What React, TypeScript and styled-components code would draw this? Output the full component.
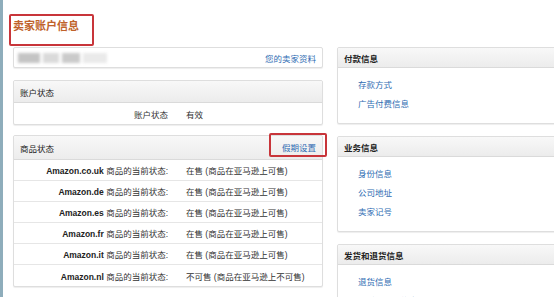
import React from "react";
import styled, { createGlobalStyle } from "styled-components";

const GlobalStyle = createGlobalStyle`
  html, body { margin: 0; padding: 0; background: #fff; }
  body {
    font-family: "Liberation Sans", "Noto Sans CJK SC", sans-serif;
    font-size: 8.5px;
    color: #333;
  }
  * { box-sizing: border-box; }
`;

const Page = styled.div`
  height: 297px;
  overflow: hidden;
  border-left: 3px solid #8eadbb;
  padding-left: 10px;
`;

const TitleBar = styled.div`
  height: 47px;
  padding-top: 21px;
`;

const Title = styled.h1`
  position: relative;
  display: inline-block;
  margin: 0;
  font-size: 11px;
  line-height: 11px;
  font-weight: bold;
  color: #c0622a;
  &::after {
    content: "";
    position: absolute;
    top: -7px;
    left: -4px;
    right: -15px;
    bottom: -14px;
    border: 2px solid #c8353a;
    border-radius: 2px;
  }
`;

const Columns = styled.div`
  display: grid;
  grid-template-columns: 310px 220px;
  column-gap: 14px;
  align-items: start;
`;

const Column = styled.div`
  display: flex;
  flex-direction: column;
`;

const Panel = styled.section<{ $gap?: number }>`
  margin-top: ${(p) => p.$gap ?? 0}px;
  border: 1px solid #dedede;
  border-radius: 2px;
  background: #fff;
  box-shadow: 0 1px 1px rgba(0, 0, 0, 0.07);
`;

const ProfileBar = styled(Panel)`
  height: 21px;
  display: flex;
  align-items: center;
  justify-content: space-between;
  padding: 0 6px 0 4px;
`;

const Blurred = styled.div`
  display: flex;
  gap: 3px;
  filter: blur(1.8px);
`;

const BlurBlock = styled.span<{ $w: number; $c: string }>`
  display: block;
  width: ${(p) => p.$w}px;
  height: 10px;
  background: ${(p) => p.$c};
`;

const Header = styled.div<{ $h: number; $bold?: boolean }>`
  height: ${(p) => p.$h}px;
  display: flex;
  align-items: center;
  justify-content: space-between;
  padding: 0 6px 0 6px;
  background: linear-gradient(#f8f8f8, #ececec);
  border-bottom: 1px solid #dadada;
  border-radius: 2px 2px 0 0;
  color: #222;
  font-weight: ${(p) => (p.$bold ? "bold" : "normal")};
`;

const Link = styled.a`
  color: #2f6db3;
  text-decoration: none;
  cursor: pointer;
`;

const MarkedLink = styled(Link)`
  position: relative;
  display: inline-block;
  line-height: 10px;
  &::after {
    content: "";
    position: absolute;
    top: -10px;
    left: -13px;
    right: -11px;
    bottom: -4px;
    border: 2px solid #c8353a;
    border-radius: 2px;
  }
`;

const Row = styled.div`
  height: 21px;
  display: grid;
  grid-template-columns: 154px 1fr;
  column-gap: 18px;
  align-items: center;
  border-bottom: 1px solid #e6e6e6;
  &:last-child {
    border-bottom: none;
  }
`;

const Label = styled.div`
  text-align: right;
  white-space: nowrap;
`;

const Site = styled.b`
  font-weight: bold;
  color: #222;
`;

const Value = styled.div`
  white-space: nowrap;
`;

const LinkList = styled.ul`
  list-style: none;
  margin: 0;
  padding: 8px 0 9px 20px;
  line-height: 19px;
`;

const rows = [
  ["Amazon.co.uk", "在售 (商品在亚马逊上可售)"],
  ["Amazon.de", "在售 (商品在亚马逊上可售)"],
  ["Amazon.es", "在售 (商品在亚马逊上可售)"],
  ["Amazon.fr", "在售 (商品在亚马逊上可售)"],
  ["Amazon.it", "在售 (商品在亚马逊上可售)"],
  ["Amazon.nl", "不可售 (商品在亚马逊上不可售)"],
];

const sidePanels: { title: string; links: string[]; gap: number }[] = [
  { title: "付款信息", links: ["存款方式", "广告付费信息"], gap: 0 },
  { title: "业务信息", links: ["身份信息", "公司地址", "卖家记号"], gap: 12 },
  { title: "发货和退货信息", links: ["退货信息", "配送设置和信息"], gap: 12 },
];

export default function App() {
  return (
    <>
      <GlobalStyle />
      <Page>
        <TitleBar>
          <Title>卖家账户信息</Title>
        </TitleBar>
        <Columns>
          <Column>
            <ProfileBar>
              <Blurred>
                <BlurBlock $w={22} $c="#c4c4c4" />
                <BlurBlock $w={16} $c="#dadada" />
                <BlurBlock $w={18} $c="#cacaca" />
                <BlurBlock $w={24} $c="#eaeaea" />
              </Blurred>
              <Link>您的卖家资料</Link>
            </ProfileBar>
            <Panel $gap={12}>
              <Header $h={22}>账户状态</Header>
              <Row>
                <Label>账户状态</Label>
                <Value>有效</Value>
              </Row>
            </Panel>
            <Panel $gap={10}>
              <Header $h={24}>
                <span>商品状态</span>
                <MarkedLink>假期设置</MarkedLink>
              </Header>
              {rows.map(([site, status]) => (
                <Row key={site}>
                  <Label>
                    <Site>{site}</Site> 商品的当前状态:
                  </Label>
                  <Value>{status}</Value>
                </Row>
              ))}
            </Panel>
          </Column>
          <Column>
            {sidePanels.map((p) => (
              <Panel key={p.title} $gap={p.gap}>
                <Header $h={20} $bold>
                  {p.title}
                </Header>
                <LinkList>
                  {p.links.map((l) => (
                    <li key={l}>
                      <Link>{l}</Link>
                    </li>
                  ))}
                </LinkList>
              </Panel>
            ))}
          </Column>
        </Columns>
      </Page>
    </>
  );
}
